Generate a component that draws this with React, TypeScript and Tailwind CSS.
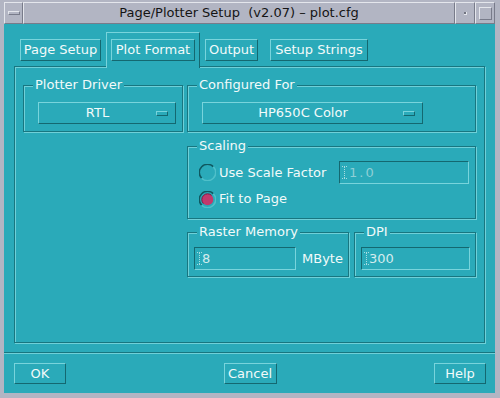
import React from 'react'

const raised = 'border border-t-[#78d4dc] border-l-[#78d4dc] border-r-[#146870] border-b-[#146870]'
const sunken = 'border border-t-[#146870] border-l-[#146870] border-r-[#78d4dc] border-b-[#78d4dc]'
const etched = 'border border-[#187680] shadow-[inset_1px_1px_0_#6fd0d8,1px_1px_0_#6fd0d8]'
const grayRaised = 'border border-t-[#e4e6ec] border-l-[#e4e6ec] border-r-[#787b8a] border-b-[#787b8a]'

function Group({ title, className = '', children }: { title: string; className?: string; children: React.ReactNode }) {
  return (
    <fieldset className={`${etched} ${className}`}>
      <legend className="ml-[9px] px-[2px] leading-[16px] bg-[#2aaab9] text-[#f2fafa]">{title}</legend>
      {children}
    </fieldset>
  )
}

function OptionMenu({ label, width }: { label: string; width: string }) {
  return (
    <div className={`${raised} ${width} h-[22px] flex items-center`}>
      <span className="flex-1 text-center text-[#f2fafa]">{label}</span>
      <span className={`${raised} w-[12px] h-[5px] mr-[7px]`} />
    </div>
  )
}

function Cursor() {
  return (
    <svg width="5" height="13" viewBox="0 0 5 13" className="shrink-0">
      <line x1="0" y1="0.5" x2="5" y2="0.5" stroke="#a8dce0" strokeDasharray="1 1" />
      <line x1="2.5" y1="1" x2="2.5" y2="12" stroke="#a8dce0" strokeDasharray="1 1" />
      <line x1="0" y1="12.5" x2="5" y2="12.5" stroke="#a8dce0" strokeDasharray="1 1" />
    </svg>
  )
}

function TextField({ value, width, dim }: { value: string; width: string; dim?: boolean }) {
  return (
    <div className={`${sunken} ${width} h-[23px] flex items-center pl-[2px]`}>
      <Cursor />
      <span className={dim ? 'ml-[2px] text-[#8fcfd6] tracking-[2px]' : 'text-[#d4ecee]'}>{value}</span>
    </div>
  )
}

function Radio({ on }: { on?: boolean }) {
  return (
    <svg width="17" height="17" viewBox="0 0 17 17" className="shrink-0">
      <path d="M2.7 14.3 A8 8 0 0 1 14.3 2.7" fill="none" stroke="#0f5860" strokeWidth="1.5" />
      <path d="M14.3 2.7 A8 8 0 0 1 2.7 14.3" fill="none" stroke="#4fc0ca" strokeWidth="1.5" />
      {on && <circle cx="8.5" cy="8.5" r="5.8" fill="#c23a6c" />}
      {on && <path d="M4.4 12.6 A5.8 5.8 0 0 1 12.6 4.4" fill="none" stroke="#7a1c44" strokeWidth="1" />}
    </svg>
  )
}

export default function App() {
  return (
    <div className="w-[500px] h-[398px] overflow-hidden bg-[#b2b5c3] font-['DejaVu_Sans',sans-serif] text-[13px] flex flex-col pl-[4px] pr-[5px] pt-[2px] pb-[5px]">
      <div className="flex h-[22px]">
        <div className={`${grayRaised} w-[19px] flex items-center justify-center`}>
          <span className={`${grayRaised} w-[12px] h-[4px]`} />
        </div>
        <div className={`${grayRaised} flex-1 flex items-center justify-center text-[13px] text-[#141414]`}>
          Page/Plotter Setup&nbsp;&nbsp;(v2.07) – plot.cfg
        </div>
        <div className={`${grayRaised} w-[20px] flex items-center justify-center`}>
          <span className="w-[3px] h-[3px] bg-[#70737f] border-r border-b border-[#e4e6ec]" />
        </div>
        <div className={`${grayRaised} w-[20px] flex items-center justify-center`}>
          <span className={`${grayRaised} w-[13px] h-[13px]`} />
        </div>
      </div>

      <div className="flex-1 bg-[#2aaab9] flex flex-col text-[#f2fafa]">
        <div className="px-[10px]">
          <div className="flex items-start h-[34px] mt-[8px] pl-[6px] relative z-10">
            <div className={`${raised} mt-[7px] w-[81px] h-[22px] flex items-center justify-center`}>Page Setup</div>
            <div className="ml-[5px] w-[94px] h-[36px] bg-[#2aaab9] border-t border-l border-r border-t-[#78d4dc] border-l-[#78d4dc] border-r-[#146870] pt-[6px] px-[4px]">
              <div className={`${raised} h-[22px] flex items-center justify-center`}>Plot Format</div>
            </div>
            <div className={`${raised} mt-[7px] ml-[5px] w-[53px] h-[22px] flex items-center justify-center`}>Output</div>
            <div className={`${raised} mt-[7px] ml-[12px] w-[98px] h-[22px] flex items-center justify-center`}>Setup Strings</div>
          </div>

          <div className={`${etched} h-[277px] flex gap-[4px] pl-[8px] pr-[8px] pt-[10px]`}>
            <Group title="Plotter Driver" className="w-[161px] self-start">
              <div className="pl-[14px] pt-[9px] pb-[7px]">
                <OptionMenu label="RTL" width="w-[138px]" />
              </div>
            </Group>

            <div className="w-[289px] flex flex-col">
              <Group title="Configured For">
                <div className="pl-[14px] pt-[9px] pb-[7px]">
                  <OptionMenu label="HP650C Color" width="w-[221px]" />
                </div>
              </Group>

              <Group title="Scaling" className="mt-[6px]">
                <div className="pl-[11px] pr-[6px] pt-[7px] pb-[8px]">
                  <div className="flex items-center h-[23px]">
                    <Radio />
                    <span className="ml-[3px]">Use Scale Factor</span>
                    <div className="ml-auto">
                      <TextField value="1.0" width="w-[130px]" dim />
                    </div>
                  </div>
                  <div className="flex items-center h-[22px] mt-[4px]">
                    <Radio on />
                    <span className="ml-[3px]">Fit to Page</span>
                  </div>
                </div>
              </Group>

              <div className="flex gap-[5px] mt-[5px]">
                <Group title="Raster Memory" className="w-[162px]">
                  <div className="flex items-center pl-[6px] pt-[7px] pb-[6px]">
                    <TextField value="8" width="w-[102px]" />
                    <span className="ml-[6px]">MByte</span>
                  </div>
                </Group>
                <Group title="DPI" className="w-[122px]">
                  <div className="pl-[6px] pt-[7px] pb-[6px]">
                    <TextField value="300" width="w-[109px]" />
                  </div>
                </Group>
              </div>
            </div>
          </div>
        </div>

        <div className="mt-[9px] h-[2px] border-t border-b border-t-[#187680] border-b-[#6fd0d8]" />

        <div className="flex justify-between pl-[10px] pr-[9px] mt-[9px]">
          <div className={`${raised} w-[52px] h-[21px] flex items-center justify-center`}>OK</div>
          <div className={`${raised} w-[53px] h-[21px] flex items-center justify-center`}>Cancel</div>
          <div className={`${raised} w-[52px] h-[21px] flex items-center justify-center`}>Help</div>
        </div>
      </div>
    </div>
  )
}
